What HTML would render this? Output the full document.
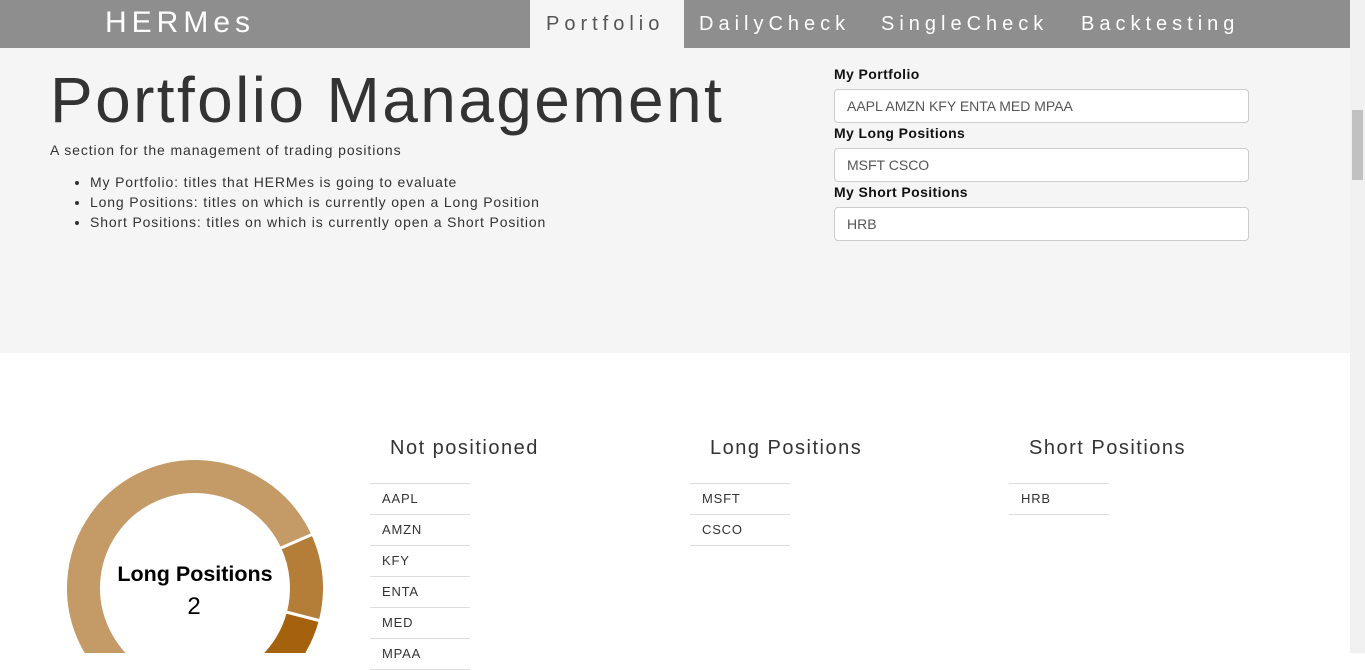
<!DOCTYPE html>
<html><head><style>
*{margin:0;padding:0;box-sizing:border-box}
body{width:1365px;height:653px;overflow:hidden;font-family:"Liberation Sans",sans-serif;background:#fff;position:relative;color:#333}
.nav{position:absolute;left:0;top:0;width:1350px;height:48px;background:#8e8e8e}
.brand{position:absolute;left:105px;top:6px;font-size:30px;color:#fff;letter-spacing:5px}
.nav a{position:absolute;top:0;height:48px;line-height:48px;font-size:20px;color:#fff;letter-spacing:5px}
.nav a.act{background:#f5f5f5;color:#555}
.hero{position:absolute;left:0;top:48px;width:1350px;height:305px;background:#f5f5f5}
h1{position:absolute;left:50px;top:63px;font-size:64px;font-weight:normal;color:#333;letter-spacing:2.4px}
.sub{position:absolute;left:50px;top:142px;font-size:14px;letter-spacing:0.9px}
ul{position:absolute;left:90px;top:172px;font-size:14px;line-height:20px;letter-spacing:0.85px}
.lbl{position:absolute;left:834px;font-size:14px;font-weight:bold;color:#111;letter-spacing:0.4px}
.inp{position:absolute;left:834px;width:415px;height:34px;background:#fff;border:1px solid #ccc;border-radius:4px;padding-left:12px;line-height:32px;font-size:14px;color:#555}
.sb{position:absolute;left:1350px;top:0;width:15px;height:653px;background:#f1f1f1}
.sb div{position:absolute;left:2px;top:110px;width:11px;height:70px;background:#c1c1c1}
h3{position:absolute;font-size:20px;font-weight:normal;color:#333;top:437px;letter-spacing:1.5px}
.list{position:absolute;top:483px;width:100px;border-top:1px solid #ddd}
.list div{height:31px;border-bottom:1px solid #ddd;padding-left:12px;line-height:30px;font-size:13px;color:#333;letter-spacing:0.8px}
</style></head><body>
<div class="nav">
<div class="brand">HERMes</div>
<a class="act" style="left:530px;width:154px;padding-left:16px">Portfolio</a>
<a style="left:699px">DailyCheck</a>
<a style="left:881px">SingleCheck</a>
<a style="left:1081px">Backtesting</a>
</div>
<div class="hero"></div>
<h1>Portfolio Management</h1>
<div class="sub">A section for the management of trading positions</div>
<ul><li>My Portfolio: titles that HERMes is going to evaluate</li><li>Long Positions: titles on which is currently open a Long Position</li><li>Short Positions: titles on which is currently open a Short Position</li></ul>
<div class="lbl" style="top:66px">My Portfolio</div>
<div class="inp" style="top:89px">AAPL AMZN KFY ENTA MED MPAA</div>
<div class="lbl" style="top:125px">My Long Positions</div>
<div class="inp" style="top:148px">MSFT CSCO</div>
<div class="lbl" style="top:184px">My Short Positions</div>
<div class="inp" style="top:207px">HRB</div>

<svg style="position:absolute;left:0;top:0" width="1350" height="653">
<g fill="none" stroke-width="33">
<path d="M185.28 699.08 A111.5 111.5 0 1 1 296.05 540.88" stroke="#c49a66"/>
<path d="M296.05 540.88 A111.5 111.5 0 0 1 302.70 616.86" stroke="#b47d38"/>
<path d="M302.70 616.86 A111.5 111.5 0 0 1 185.28 699.08" stroke="#a4620e"/>
</g>
<line x1="281" y1="548" x2="320" y2="531" stroke="#fff" stroke-width="3"/>
<line x1="286" y1="612" x2="325" y2="622" stroke="#fff" stroke-width="3"/>
<text x="195" y="581" text-anchor="middle" font-family="Liberation Sans" font-weight="bold" font-size="21.5" fill="#000">Long Positions</text>
<text x="194" y="614" text-anchor="middle" font-family="Liberation Sans" font-size="24" fill="#000">2</text>
</svg>

<h3 style="left:390px">Not positioned</h3>
<h3 style="left:710px">Long Positions</h3>
<h3 style="left:1029px">Short Positions</h3>
<div class="list" style="left:370px"><div>AAPL</div><div>AMZN</div><div>KFY</div><div>ENTA</div><div>MED</div><div>MPAA</div></div>
<div class="list" style="left:690px"><div>MSFT</div><div>CSCO</div></div>
<div class="list" style="left:1009px"><div>HRB</div></div>
<div class="sb"><div></div></div>
</body></html>
